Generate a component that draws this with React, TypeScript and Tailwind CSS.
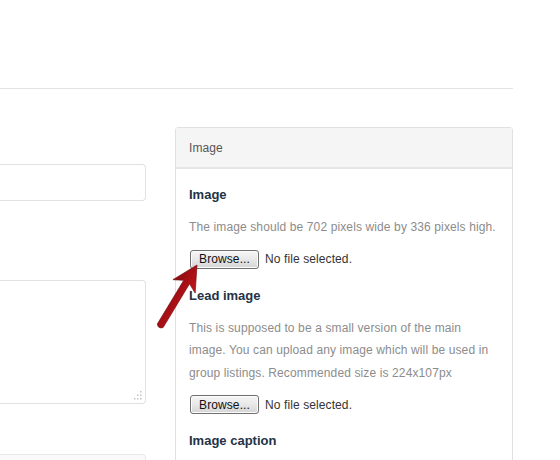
import React from 'react';

function BrowseButton() {
  return (
    <div className="ml-[1px] flex items-center gap-[6px]">
      <button
        type="button"
        className="flex h-[19px] w-[69px] items-center justify-center rounded-[3px] border border-[#707070] bg-gradient-to-b from-[#f6f6f6] via-[#e8e8e8] to-[#d4d4d4] text-[12px] leading-none tracking-[0.1px] text-[#111] shadow-[inset_0_0_0_1px_#fcfcfc]"
      >
        Browse...
      </button>
      <span className="text-[12px] tracking-[0.1px] text-[#333]">No file selected.</span>
    </div>
  );
}

function Field({ label, help, children }: { label: string; help?: React.ReactNode; children?: React.ReactNode }) {
  return (
    <div className="mb-[17px]">
      <div className="mb-[11px] text-[13px] font-bold leading-[20px] text-[#233245]">{label}</div>
      {help && (
        <p className="mb-[11px] text-[12px] leading-[22.5px] tracking-[0.12px] text-[#8c8c8c]">{help}</p>
      )}
      {children}
    </div>
  );
}

export default function App() {
  return (
    <div
      className="relative h-[460px] w-[560px] overflow-hidden bg-white"
      style={{ fontFamily: '"Liberation Sans", Arial, sans-serif' }}
    >
      <div className="h-[89px] w-[513px] border-b border-[#e3e3e3]" />

      <div className="flex w-[513px] gap-[29px]">
        {/* left form column, cut off by the window edge */}
        <div className="flex w-[146px] shrink-0 flex-col pt-[75px]">
          <div className="h-[37px] rounded-r-[4px] border border-l-0 border-[#e2e2e2] bg-white" />
          <div className="relative mt-[79px] h-[124px] rounded-r-[4px] border border-l-0 border-[#e2e2e2] bg-white">
            <svg className="absolute bottom-[3px] right-[3px]" width="9" height="9" viewBox="0 0 9 9">
              <g fill="#c4c4c4">
                <rect x="7" y="0" width="1.5" height="1.5" />
                <rect x="4" y="3.5" width="1.5" height="1.5" />
                <rect x="7" y="3.5" width="1.5" height="1.5" />
                <rect x="1" y="7" width="1.5" height="1.5" />
                <rect x="4" y="7" width="1.5" height="1.5" />
                <rect x="7" y="7" width="1.5" height="1.5" />
              </g>
            </svg>
          </div>
          <div className="mt-[50px] h-[20px] rounded-tr-[4px] border-t border-r border-[#e8e8e8] bg-[#fafafa]" />
        </div>

        {/* image panel */}
        <div className="mt-[38px] flex-1 rounded-t-[4px] border border-b-0 border-[#e0e0e0]">
          <div className="flex h-[41px] items-center border-b-2 border-[#e6e6e6] bg-[#f5f5f5] px-[13px] text-[12px] tracking-[0.1px] text-[#555]">
            Image
          </div>
          <div className="px-[13px] pt-[16px]">
            <Field label="Image" help="The image should be 702 pixels wide by 336 pixels high.">
              <BrowseButton />
            </Field>
            <Field
              label="Lead image"
              help={
                <>
                  This is supposed to be a small version of the main
                  <br />
                  image. You can upload any image which will be used in
                  <br />
                  group listings. Recommended size is 224x107px
                </>
              }
            >
              <BrowseButton />
            </Field>
            <Field label="Image caption" />
          </div>
        </div>
      </div>

      {/* annotation arrow */}
      <svg className="pointer-events-none absolute left-0 top-0" width="560" height="460" viewBox="0 0 560 460">
        <defs>
          <linearGradient id="arrowFill" x1="0" y1="0" x2="0" y2="1">
            <stop offset="0" stopColor="#c4161c" />
            <stop offset="1" stopColor="#8a0a0e" />
          </linearGradient>
        </defs>
        <g transform="translate(197 265) rotate(121.2)">
          <path
            d="M0 0 L25 -13 L20 -3.4 L71 -3.4 Q75 0 71 3.4 L20 3.4 L25 13 Z"
            fill="url(#arrowFill)"
            stroke="#760a0d"
            strokeWidth="0.6"
            strokeLinejoin="round"
          />
        </g>
      </svg>
    </div>
  );
}
